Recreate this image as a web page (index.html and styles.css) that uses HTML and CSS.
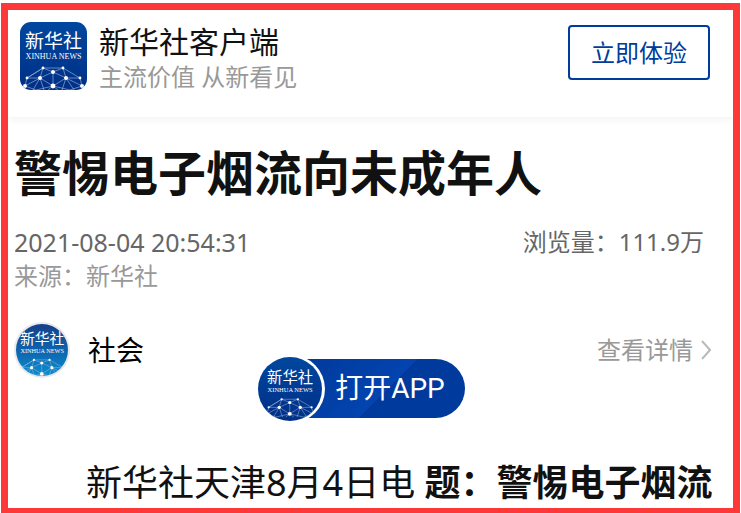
FILE: index.html
```html
<!DOCTYPE html>
<html lang="zh-CN">
<head>
<meta charset="utf-8">
<meta name="viewport" content="width=device-width, initial-scale=1">
<title>警惕电子烟流向未成年人</title>
<link rel="stylesheet" href="styles.css">
</head>
<body>
<svg class="defs" aria-hidden="true">
  <defs>
    <linearGradient id="navy" x1="0" y1="0" x2="0" y2="1"><stop offset="0" stop-color="#00479f"/><stop offset="1" stop-color="#002f86"/></linearGradient>
    <linearGradient id="sky" x1="0" y1="0" x2="0" y2="1"><stop offset="0" stop-color="#183b86"/><stop offset=".5" stop-color="#0e63ad"/><stop offset="1" stop-color="#0a93d2"/></linearGradient>
    <g id="mark">
      <g class="net-lines">
        <path d="M7 56 23 46 43 46 60 56M23 46 33 50 43 46M7 56 20 56 33 50 46 56 60 56M23 46 20 56 33 64 46 56 43 46M33 50V64M7 56 5 64 20 56 13 68M60 56 62 64 46 56 54 68M5 64 16 68 33 64 50 68 62 64M20 56 24 68M46 56 42 68M23 46 7 56M33 64 28 68M33 64 38 68"/>
      </g>
      <g class="net-dots">
        <circle cx="23" cy="46" r="1.4"/><circle cx="43" cy="46" r="1.4"/><circle cx="33" cy="50" r="2"/><circle cx="7" cy="56" r="1.4"/><circle cx="60" cy="56" r="1.4"/><circle cx="20" cy="56" r="2"/><circle cx="46" cy="56" r="2"/><circle cx="33" cy="64" r="2.4"/><circle cx="5" cy="64" r="2"/><circle cx="62" cy="64" r="2"/>
      </g>
      <text class="mark-cn" x="33.5" y="26">新华社</text>
      <text class="mark-en" x="33.5" y="37">XINHUA NEWS</text>
    </g>
    <clipPath id="square"><rect width="67" height="68" rx="11"/></clipPath>
    <clipPath id="round"><circle cx="28" cy="28" r="26"/></clipPath>
    <clipPath id="badge"><circle cx="32" cy="32" r="32"/></clipPath>
  </defs>
</svg>
<div class="frame">
  <header class="topbar">
    <svg class="logo" viewBox="0 0 67 68" role="img" aria-label="新华社">
      <g clip-path="url(#square)"><rect width="67" height="68" fill="url(#navy)"/><use href="#mark"/></g>
    </svg>
    <div class="brand">
      <div class="brand-name">新华社客户端</div>
      <div class="brand-slogan">主流价值 从新看见</div>
    </div>
    <button class="try" type="button">立即体验</button>
  </header>
  <main class="article">
    <h1>警惕电子烟流向未成年人</h1>
    <div class="meta">
      <time datetime="2021-08-04T20:54:31">2021-08-04 20:54:31</time>
      <span class="views">浏览量：111.9万</span>
    </div>
    <div class="source">来源：新华社</div>
    <div class="channel">
      <svg class="avatar" viewBox="0 0 56 56" aria-hidden="true">
        <circle cx="28" cy="28" r="28" fill="#e8e9ec"/>
        <g clip-path="url(#round)"><rect width="56" height="56" fill="url(#sky)"/><use href="#mark" transform="translate(2 2) scale(.78)"/></g>
      </svg>
      <span class="channel-name">社会</span>
      <a class="more" href="#">查看详情
        <svg class="chevron" viewBox="0 0 10 20" aria-hidden="true"><path d="M1 1 9 10 1 19"/></svg>
      </a>
    </div>
    <p class="lead">新华社天津8月4日电 <strong>题：警惕电子烟流</strong></p>
  </main>
  <button class="open-app" type="button">
    <svg class="app-badge" viewBox="0 0 67 64" aria-hidden="true">
      <circle cx="33" cy="32" r="34" fill="#fff"/>
      <g clip-path="url(#badge)"><rect width="64" height="64" fill="url(#navy)"/><use href="#mark" transform="translate(5 5) scale(.81)"/></g>
    </svg>
    <span class="app-label">打开APP</span>
  </button>
</div>
</body>
</html>
```
FILE: styles.css
```css
* {
  box-sizing: border-box;
}

body {
  margin: 0;
  padding: 3px 1px 0;
  background: #fff;
  color: #111;
  font-family: "Noto Sans", "Noto Sans CJK SC", sans-serif;
  font-size: 24px;
  font-weight: 400;
  line-height: 34px;
}

button {
  font: inherit;
}

.defs {
  position: absolute;
  width: 0;
  height: 0;
}

.frame {
  position: relative;
  border: 7px solid #fc3938;
  border-bottom-width: 6px;
}

.topbar {
  display: flex;
  align-items: flex-start;
  padding: 12px 23px 25px 12px;
  box-shadow: 0 2px 8px rgba(0, 0, 0, 0.06);
  clip-path: inset(0 0 -12px 0);
}

.logo {
  width: 67px;
  height: 68px;
}

.net-lines {
  fill: none;
  stroke: #a9bddd;
  stroke-width: 0.6;
}

.net-dots {
  fill: #fff;
}

.mark-cn,
.mark-en {
  fill: #fff;
  text-anchor: middle;
}

.mark-cn {
  font: 400 19px "Noto Sans CJK SC", sans-serif;
}

.mark-en {
  font: 400 8px "Liberation Serif", serif;
}

.brand {
  flex: 1;
  padding-left: 12px;
}

.brand-name {
  font-size: 30px;
  line-height: 40px;
}

.brand-slogan {
  color: #999;
  line-height: 30px;
}

.try {
  margin-top: 3px;
  padding: 0 21px;
  height: 55px;
  border: 2px solid #003c9c;
  border-radius: 4px;
  background: #fff;
  color: #003c9c;
}

.article {
  padding: 24px 22px 0 6px;
}

h1 {
  margin: 0 0 20px;
  font-size: 48px;
  font-weight: 700;
  line-height: 64px;
}

.meta {
  display: flex;
  justify-content: space-between;
  padding-right: 7px;
  color: #666;
  font-size: 25px;
}

.views {
  font-size: 24px;
}

.source {
  color: #999;
}

.channel {
  display: flex;
  align-items: center;
  margin: 29px 0 80px;
}

.avatar {
  width: 56px;
  height: 56px;
}

.channel-name {
  margin-left: 18px;
  color: #000;
  font-size: 28px;
}

.more {
  display: flex;
  align-items: center;
  gap: 8px;
  margin-left: auto;
  color: #999;
  text-decoration: none;
}

.chevron {
  width: 10px;
  height: 20px;
  fill: none;
  stroke: #bbb;
  stroke-width: 2;
}

.lead {
  margin: 0 -22px 0 0;
  font-size: 36px;
  line-height: 50px;
  text-indent: 2em;
  white-space: nowrap;
}

.lead strong {
  font-weight: 700;
}

.open-app {
  position: absolute;
  bottom: 90px;
  left: 250px;
  display: flex;
  align-items: center;
  width: 207px;
  height: 59px;
  padding: 0;
  border: 0;
  border-radius: 30px;
  background: linear-gradient(135deg, #003a9c 20%, #0444b0 60%, #003a9c 60%);
  color: #fff;
}

.app-badge {
  flex: none;
  width: 67px;
  height: 64px;
}

.app-label {
  flex: 1;
  padding-right: 10px;
  font-family: Roboto, "Noto Sans CJK SC", sans-serif;
  font-size: 28px;
  font-weight: 400;
}
```
